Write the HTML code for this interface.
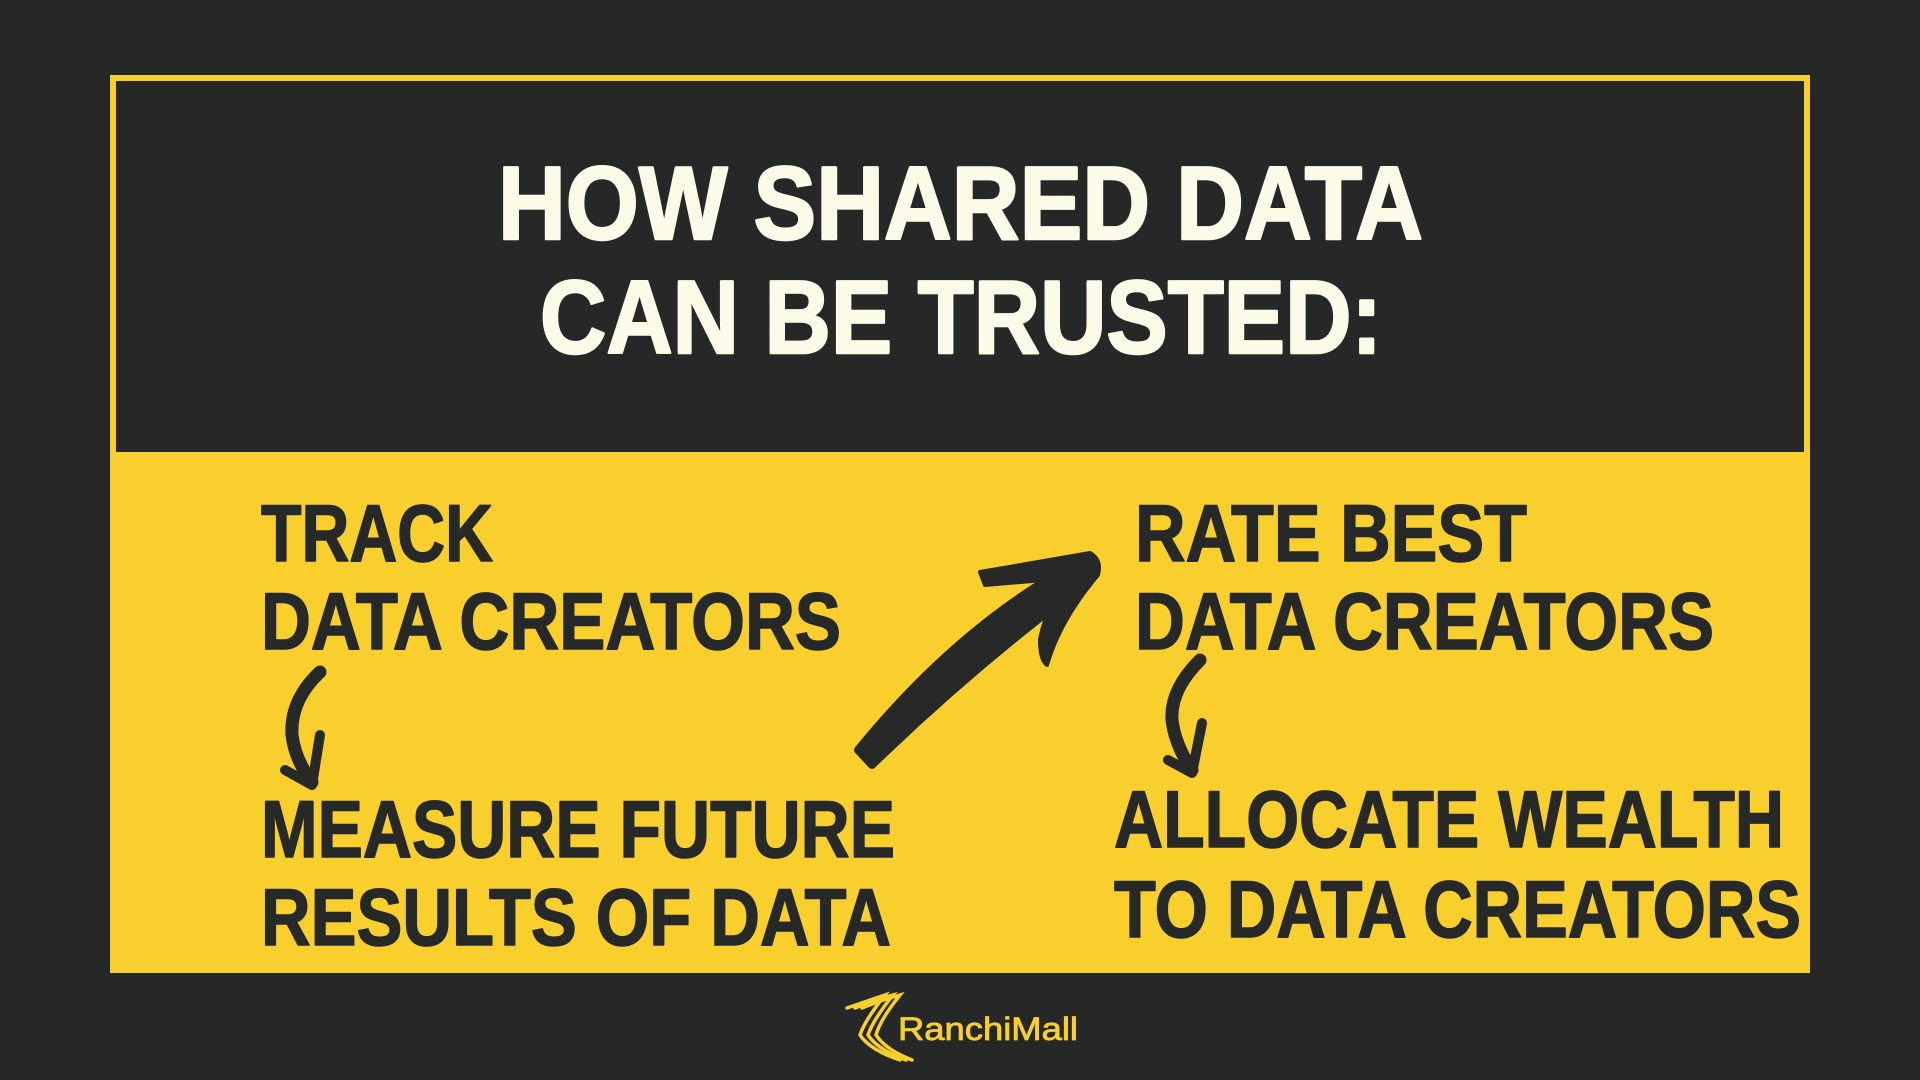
<!DOCTYPE html>
<html><head><meta charset="utf-8"><style>
html,body{margin:0;padding:0;background:#262828;width:1920px;height:1080px;overflow:hidden}
svg{display:block}
</style></head><body>
<svg width="1920" height="1080" viewBox="0 0 1920 1080">
<rect width="1920" height="1080" fill="#262828"/>
<rect x="110" y="455" width="1700" height="518" fill="#f8cf2d"/>
<rect x="113" y="78" width="1694" height="377" fill="none" stroke="#f8cf2d" stroke-width="6"/>
<g font-family="Liberation Sans, sans-serif" font-weight="bold">
<g fill="#fbfbe8" stroke="#fbfbe8" stroke-width="2.5" stroke-linejoin="round">
<text x="498" y="239" font-size="104" textLength="925" lengthAdjust="spacingAndGlyphs">HOW SHARED DATA</text>
<text x="540" y="353" font-size="104" textLength="842" lengthAdjust="spacingAndGlyphs">CAN BE TRUSTED:</text>
</g>
<g fill="#272928" stroke="#272928" stroke-width="1.5" stroke-linejoin="round" font-size="81">
<text x="261" y="561" textLength="232" lengthAdjust="spacingAndGlyphs">TRACK</text>
<text x="261" y="649" textLength="580" lengthAdjust="spacingAndGlyphs">DATA CREATORS</text>
<text x="261" y="857" textLength="634" lengthAdjust="spacingAndGlyphs">MEASURE FUTURE</text>
<text x="261" y="945" textLength="630" lengthAdjust="spacingAndGlyphs">RESULTS OF DATA</text>
<text x="1135" y="561" textLength="392" lengthAdjust="spacingAndGlyphs">RATE  BEST</text>
<text x="1135" y="649" textLength="579" lengthAdjust="spacingAndGlyphs">DATA CREATORS</text>
<text x="1114" y="847" textLength="670" lengthAdjust="spacingAndGlyphs">ALLOCATE WEALTH</text>
<text x="1114" y="937" textLength="687" lengthAdjust="spacingAndGlyphs">TO DATA CREATORS</text>
</g></g>
<g fill="#272928" stroke="#272928" stroke-linecap="round" stroke-linejoin="round">
<path d="M858 750 Q960 625 1078 562 L1092 578 Q975 665 872 765 Z" stroke-width="8"/>
<path d="M980 572 L1090 553 Q1102 560 1098 575 Q1060 620 1047 665 Q1040 660 1040 640 Q1045 610 1068 578 L985 585 Z" stroke-width="4"/>
<path d="M320 672 Q290 700 292 735 Q295 760 312 782" fill="none" stroke-width="13"/>
<path d="M285 770 L312 785 L320 735" fill="none" stroke-width="10"/>
<path d="M1200 660 Q1170 690 1172 720 Q1175 745 1192 770" fill="none" stroke-width="13"/>
<path d="M1168 760 L1192 773 L1202 723" fill="none" stroke-width="10"/>
</g>
<g fill="none" stroke="#f8cf2d" stroke-width="3.5" stroke-linecap="round">
<path d="M847 1008 Q870 1000 885 995 Q865 1020 860 1035 Q870 1050 900 1060"/>
<path d="M855 1008 Q875 1000 893 995 Q873 1020 868 1035 Q878 1050 906 1060"/>
<path d="M862 1008 Q882 1000 900 995 Q880 1020 876 1035 Q886 1050 912 1060"/>
</g>
<text x="898" y="1040" font-family="Liberation Sans, sans-serif" font-size="32" fill="#f8cf2d" stroke="#f8cf2d" stroke-width="0.8" textLength="180" lengthAdjust="spacingAndGlyphs">RanchiMall</text>
</svg>
</body></html>
